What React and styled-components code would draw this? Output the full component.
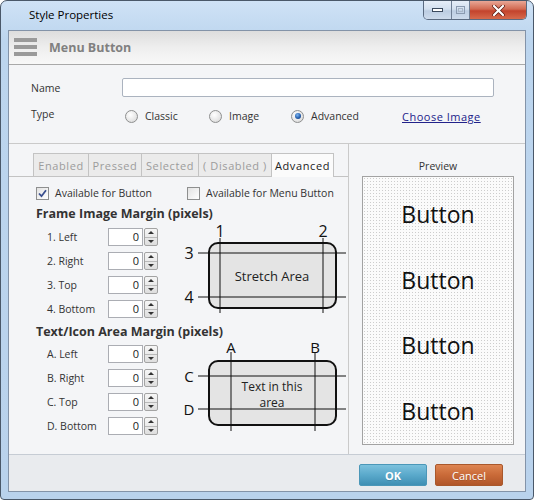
import React from 'react';
import styled, { createGlobalStyle } from 'styled-components';

const GlobalStyle = createGlobalStyle`
  html, body {
    margin: 0;
    padding: 0;
    background: #ffffff;
  }
  body {
    font-family: "Open Sans", "Noto Sans", sans-serif;
    font-size: 10.5px;
    color: #222;
  }
  * {
    box-sizing: border-box;
  }
`;

const Window = styled.div`
  width: 534px;
  height: 500px;
  display: flex;
  flex-direction: column;
  border: 1px solid #4a5869;
  border-radius: 7px 7px 4px 4px;
  background: linear-gradient(180deg, #cfe2f6 0%, #bcd5ee 8%, #b9d2ec 100%);
  overflow: hidden;
`;

const TitleBar = styled.div`
  height: 29px;
  flex: 0 0 29px;
  display: flex;
  align-items: flex-start;
  padding-left: 28px;
`;

const Title = styled.div`
  margin-top: 6px;
  flex: 1;
  font-size: 11.5px;
  color: #000;
`;

const CaptionGroup = styled.div`
  display: flex;
  margin-right: 6px;
  height: 19px;
  border: 1px solid #5a6a80;
  border-top: none;
  border-radius: 0 0 5px 5px;
  overflow: hidden;
`;

const CaptionButton = styled.div`
  width: ${(p) => p.$w}px;
  height: 100%;
  display: flex;
  align-items: center;
  justify-content: center;
  border-left: ${(p) => (p.$first ? 'none' : '1px solid #6f7f95')};
  background: ${(p) =>
    p.$close
      ? 'linear-gradient(180deg, #e9a796 0%, #d26a52 45%, #c3432c 55%, #d66a4c 100%)'
      : 'linear-gradient(180deg, #e6eef8 0%, #d3e0ef 45%, #bccde2 55%, #cddbec 100%)'};
`;

const Client = styled.div`
  flex: 1;
  margin: 0 7px 7px 7px;
  border: 1px solid #8393a8;
  background: #f4f5f7;
  display: flex;
  flex-direction: column;
`;

const Header = styled.div`
  height: 34px;
  flex: 0 0 34px;
  display: flex;
  align-items: center;
  gap: 12px;
  padding-left: 5px;
  border-bottom: 1px solid #a9a9a9;
  background: linear-gradient(180deg, #dddddd 0%, #eeeeee 50%, #f8f8f8 100%);
`;

const Burger = styled.div`
  width: 23px;
  display: flex;
  flex-direction: column;
  gap: 3px;
  margin-top: -1px;

  span {
    display: block;
    height: 4px;
    background: #9a9a9a;
  }
`;

const HeaderTitle = styled.div`
  font-weight: 700;
  font-size: 12.5px;
  color: #808080;
`;

const Form = styled.div`
  height: 78px;
  flex: 0 0 78px;
  padding: 13px 0 0 22px;
  display: flex;
  flex-direction: column;
  gap: 10px;
`;

const FormRow = styled.div`
  display: flex;
  align-items: center;
  height: ${(p) => p.$h}px;
`;

const FormLabel = styled.div`
  width: 91px;
  color: #333;
  margin-top: ${(p) => p.$dy || 0}px;
`;

const TextInput = styled.div`
  width: 372px;
  height: 19px;
  border: 1px solid #abb3bf;
  border-radius: 2px;
  background: #fff;
`;

const RadioGroup = styled.div`
  display: flex;
  align-items: center;
  padding-left: 3px;
`;

const Radio = styled.div`
  display: flex;
  align-items: center;
  gap: 7px;
  width: ${(p) => p.$w}px;
  color: #333;
`;

const RadioDot = styled.span`
  width: 13px;
  height: 13px;
  border-radius: 50%;
  border: 1px solid #8e8f8f;
  background: radial-gradient(circle at 40% 35%, #ffffff 0%, #e6e6e6 60%, #cfcfcf 100%);
  display: flex;
  align-items: center;
  justify-content: center;

  &::after {
    content: '';
    display: ${(p) => (p.$on ? 'block' : 'none')};
    width: 6px;
    height: 6px;
    border-radius: 50%;
    background: radial-gradient(circle at 40% 35%, #7fb6ef 0%, #2660b0 55%, #16325e 100%);
  }
`;

const LinkText = styled.a`
  color: #22228a;
  text-decoration: underline;
  letter-spacing: 0.5px;
  font-size: 11px;
`;

const Lower = styled.div`
  flex: 1;
  display: flex;
  border-top: 1px solid #cacaca;
`;

const LeftPanel = styled.div`
  width: 340px;
  border-right: 1px solid #cacaca;
  padding-top: 9px;
  display: flex;
  flex-direction: column;
`;

const TabStrip = styled.div`
  display: flex;
  padding-left: 24px;
  border-bottom: 1px solid #c3c3c3;
  height: 24px;
`;

const Tab = styled.div`
  width: ${(p) => p.$w}px;
  height: ${(p) => (p.$active ? 24 : 23)}px;
  display: flex;
  align-items: center;
  justify-content: center;
  border: 1px solid #c3c3c3;
  border-left: ${(p) => (p.$first ? '1px solid #c3c3c3' : 'none')};
  border-bottom: none;
  background: ${(p) => (p.$active ? '#fbfbfb' : '#ebebeb')};
  color: ${(p) => (p.$active ? '#222' : '#9c9c9c')};
  font-size: 11px;
  letter-spacing: 0.6px;
  margin-bottom: ${(p) => (p.$active ? -1 : 0)}px;
`;

const TabBody = styled.div`
  padding: 9px 0 0 27px;
  display: flex;
  flex-direction: column;
`;

const CheckRow = styled.div`
  display: flex;
  align-items: center;
  height: 14px;
`;

const Check = styled.label`
  display: flex;
  align-items: center;
  gap: 6px;
  width: ${(p) => p.$w}px;
  color: #333;
`;

const CheckBox = styled.span`
  width: 13px;
  height: 13px;
  border: 1px solid #8e8f8f;
  background: linear-gradient(135deg, #e2e2e2 0%, #ffffff 100%);
  display: flex;
  align-items: center;
  justify-content: center;
`;

const Heading = styled.div`
  margin-top: ${(p) => p.$mt}px;
  height: 16px;
  line-height: 16px;
  font-weight: 700;
  font-size: 12.5px;
  color: #333;
`;

const SectionBody = styled.div`
  display: flex;
  align-items: flex-start;
`;

const SpinList = styled.div`
  width: 111px;
  margin: ${(p) => p.$mt}px 0 0 11px;
  display: flex;
  flex-direction: column;
  gap: 6px;
`;

const SpinRow = styled.div`
  display: flex;
  align-items: center;
  height: 18px;
`;

const SpinLabel = styled.div`
  width: 61px;
  color: #333;
`;

const SpinInput = styled.div`
  width: 35px;
  height: 18px;
  border: 1px solid #abadb3;
  background: #fff;
  text-align: right;
  padding-right: 3px;
  line-height: 16px;
  font-size: 11px;
  color: #222;
`;

const Spinner = styled.div`
  margin-left: 1px;
  width: 14px;
  height: 18px;
  border: 1px solid #a3a3a3;
  border-radius: 2px;
  display: flex;
  flex-direction: column;
  background: linear-gradient(180deg, #f6f6f6 0%, #dedede 100%);
`;

const SpinHalf = styled.div`
  flex: 1;
  display: flex;
  align-items: center;
  justify-content: center;
  border-top: ${(p) => (p.$down ? '1px solid #b9b9b9' : 'none')};

  &::after {
    content: '';
    border-left: 3px solid transparent;
    border-right: 3px solid transparent;
    ${(p) => (p.$down ? 'border-top: 3px solid #333;' : 'border-bottom: 3px solid #333;')}
  }
`;

/* the diagram reaches a few pixels up into the heading's line */
const Diagram = styled.svg`
  display: block;
  margin: -6px 0 0 22px;
  overflow: visible;
  font-family: "Open Sans", "Noto Sans", sans-serif;
`;

const RightPanel = styled.div`
  flex: 1;
  display: flex;
  flex-direction: column;
  align-items: flex-start;
  padding: 15px 0 0 13px;
`;

const PreviewLabel = styled.div`
  width: 152px;
  text-align: center;
  height: 14px;
  line-height: 14px;
  color: #333;
`;

const PreviewBox = styled.div`
  margin-top: 3px;
  width: 152px;
  height: 269px;
  border: 1px solid #a2a2a2;
  background-color: #fbfbfb;
  background-image: radial-gradient(circle, #cdcdcd 0.7px, transparent 0.9px);
  background-size: 3px 3px;
  padding-top: 4px;
  display: flex;
  flex-direction: column;
`;

const PreviewButton = styled.div`
  height: 66px;
  display: flex;
  align-items: center;
  justify-content: center;
  font-size: 23px;
  color: #111;
`;

const Footer = styled.div`
  height: 37px;
  flex: 0 0 37px;
  border-top: 1px solid #c6ccd4;
  background: #e9ebee;
  display: flex;
  justify-content: flex-end;
  align-items: flex-start;
  gap: 8px;
  padding: 9px 22px 0 0;
`;

const DialogButton = styled.div`
  width: 68px;
  height: 22px;
  border-radius: 2px;
  display: flex;
  align-items: center;
  justify-content: center;
  color: #fff;
  font-weight: ${(p) => (p.$primary ? 700 : 400)};
  font-size: 11px;
  border: 1px solid ${(p) => (p.$primary ? '#4b97b8' : '#a9582c')};
  background: ${(p) =>
    p.$primary
      ? 'linear-gradient(180deg, #7cc1dd 0%, #5aa9cb 50%, #3f8fb4 100%)'
      : 'linear-gradient(180deg, #de8552 0%, #c96a38 50%, #b0562a 100%)'};
  text-shadow: 0 1px 0 rgba(0, 0, 0, 0.15);
`;

const frameRows = ['1. Left', '2. Right', '3. Top', '4. Bottom'];
const textRows = ['A. Left', 'B. Right', 'C. Top', 'D. Bottom'];
const tabs = [
  { label: 'Enabled', w: 56 },
  { label: 'Pressed', w: 53 },
  { label: 'Selected', w: 57 },
  { label: '( Disabled )', w: 73 },
  { label: 'Advanced', w: 62, active: true },
];

const SpinField = ({ label }) => (
  <SpinRow>
    <SpinLabel>{label}</SpinLabel>
    <SpinInput>0</SpinInput>
    <Spinner>
      <SpinHalf />
      <SpinHalf $down />
    </Spinner>
  </SpinRow>
);

// coordinates are shifted 6px down compared to the box top (see Diagram margin)
const FrameDiagram = () => (
  <Diagram width="168" height="102" viewBox="0 0 168 102">
    <rect x="29" y="27" width="127" height="65" rx="9" fill="#e4e4e4" stroke="#111" strokeWidth="2" />
    <line x1="40" y1="22" x2="40" y2="97" stroke="#111" strokeWidth="1" />
    <line x1="143" y1="22" x2="143" y2="97" stroke="#111" strokeWidth="1" />
    <line x1="18" y1="37" x2="166" y2="37" stroke="#111" strokeWidth="1" />
    <line x1="18" y1="81" x2="166" y2="81" stroke="#111" strokeWidth="1" />
    <text x="40" y="21" fontSize="16" textAnchor="middle" fill="#111">1</text>
    <text x="143" y="21" fontSize="16" textAnchor="middle" fill="#111">2</text>
    <text x="9" y="43" fontSize="16" textAnchor="middle" fill="#111">3</text>
    <text x="9" y="87" fontSize="16" textAnchor="middle" fill="#111">4</text>
    <text x="92" y="65" fontSize="13" textAnchor="middle" fill="#222">Stretch Area</text>
  </Diagram>
);

const TextDiagram = () => (
  <Diagram width="168" height="101" viewBox="0 0 168 101">
    <rect x="29" y="27" width="127" height="64" rx="9" fill="#e4e4e4" stroke="#111" strokeWidth="2" />
    <line x1="51" y1="18" x2="51" y2="97" stroke="#111" strokeWidth="1" />
    <line x1="135" y1="18" x2="135" y2="97" stroke="#111" strokeWidth="1" />
    <line x1="18" y1="42" x2="166" y2="42" stroke="#111" strokeWidth="1" />
    <line x1="18" y1="75" x2="166" y2="75" stroke="#111" strokeWidth="1" />
    <text x="51" y="19" fontSize="15" textAnchor="middle" fill="#111">A</text>
    <text x="135" y="19" fontSize="15" textAnchor="middle" fill="#111">B</text>
    <text x="9" y="48" fontSize="15" textAnchor="middle" fill="#111">C</text>
    <text x="9" y="81" fontSize="15" textAnchor="middle" fill="#111">D</text>
    <text x="92" y="57" fontSize="12" textAnchor="middle" fill="#222">Text in this</text>
    <text x="92" y="73" fontSize="12" textAnchor="middle" fill="#222">area</text>
  </Diagram>
);

const App = () => {
  return (
    <>
      <GlobalStyle />
      <Window>
        <TitleBar>
          <Title>Style Properties</Title>
          <CaptionGroup>
            <CaptionButton $w={27} $first>
              <svg width="11" height="4" viewBox="0 0 11 4">
                <rect x="0.5" y="0.5" width="10" height="3" fill="#fff" stroke="#3b4a5e" />
              </svg>
            </CaptionButton>
            <CaptionButton $w={18}>
              <svg width="9" height="8" viewBox="0 0 9 8">
                <rect x="0.5" y="0.5" width="8" height="7" fill="none" stroke="#8a9ab0" />
                <rect x="2.5" y="2.5" width="4" height="3" fill="none" stroke="#a8b6c8" />
              </svg>
            </CaptionButton>
            <CaptionButton $w={57} $close>
              <svg width="13" height="11" viewBox="0 0 13 11">
                <path d="M2 1 L11 10 M11 1 L2 10" stroke="#5a1a10" strokeWidth="3.6" strokeLinecap="round" />
                <path d="M2 1 L11 10 M11 1 L2 10" stroke="#fff" strokeWidth="2.2" strokeLinecap="round" />
              </svg>
            </CaptionButton>
          </CaptionGroup>
        </TitleBar>

        <Client>
          <Header>
            <Burger>
              <span />
              <span />
              <span />
            </Burger>
            <HeaderTitle>Menu Button</HeaderTitle>
          </Header>

          <Form>
            <FormRow $h={19}>
              <FormLabel>Name</FormLabel>
              <TextInput />
            </FormRow>
            <FormRow $h={18}>
              <FormLabel $dy={-4}>Type</FormLabel>
              <RadioGroup>
                <Radio $w={84}>
                  <RadioDot />
                  Classic
                </Radio>
                <Radio $w={82}>
                  <RadioDot />
                  Image
                </Radio>
                <Radio $w={111}>
                  <RadioDot $on />
                  Advanced
                </Radio>
                <LinkText href="#">Choose Image</LinkText>
              </RadioGroup>
            </FormRow>
          </Form>

          <Lower>
            <LeftPanel>
              <TabStrip>
                {tabs.map((t, i) => (
                  <Tab key={t.label} $w={t.w} $first={i === 0} $active={t.active}>
                    {t.label}
                  </Tab>
                ))}
              </TabStrip>

              <TabBody>
                <CheckRow>
                  <Check $w={151}>
                    <CheckBox>
                      <svg width="9" height="9" viewBox="0 0 9 9">
                        <path d="M1 4.5 L3.5 7.2 L8 1.2" fill="none" stroke="#3a4f8e" strokeWidth="1.8" />
                      </svg>
                    </CheckBox>
                    Available for Button
                  </Check>
                  <Check>
                    <CheckBox />
                    Available for Menu Button
                  </Check>
                </CheckRow>

                <Heading $mt={6}>Frame Image Margin (pixels)</Heading>
                <SectionBody>
                  <SpinList $mt={6}>
                    {frameRows.map((r) => (
                      <SpinField key={r} label={r} />
                    ))}
                  </SpinList>
                  <FrameDiagram />
                </SectionBody>

                <Heading $mt={6}>Text/Icon Area Margin (pixels)</Heading>
                <SectionBody>
                  <SpinList $mt={5}>
                    {textRows.map((r) => (
                      <SpinField key={r} label={r} />
                    ))}
                  </SpinList>
                  <TextDiagram />
                </SectionBody>
              </TabBody>
            </LeftPanel>

            <RightPanel>
              <PreviewLabel>Preview</PreviewLabel>
              <PreviewBox>
                {[0, 1, 2, 3].map((i) => (
                  <PreviewButton key={i}>Button</PreviewButton>
                ))}
              </PreviewBox>
            </RightPanel>
          </Lower>

          <Footer>
            <DialogButton $primary>OK</DialogButton>
            <DialogButton>Cancel</DialogButton>
          </Footer>
        </Client>
      </Window>
    </>
  );
};

export default App;
